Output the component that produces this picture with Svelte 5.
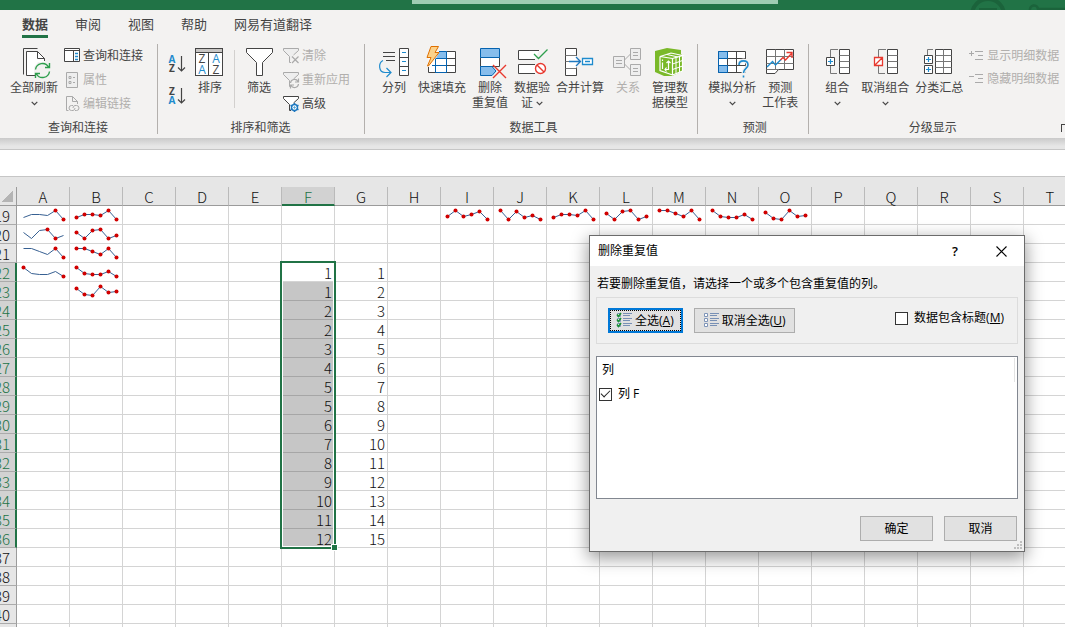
<script lang="ts">
  interface Tool {
    icon: string;
    lines: string[];
    menu?: 'below' | 'inline';
    disabled?: boolean;
  }

  interface SmallTool {
    icon: string;
    label: string;
    disabled?: boolean;
  }

  interface Spark {
    points: number[];
    marks: number[];
  }

  const tabs = ['数据', '审阅', '视图', '帮助', '网易有道翻译'];
  let activeTab = $state('数据');

  const queryTools: SmallTool[] = [
    { icon: 'queries', label: '查询和连接' },
    { icon: 'props', label: '属性', disabled: true },
    { icon: 'links', label: '编辑链接', disabled: true },
  ];

  const filterTools: SmallTool[] = [
    { icon: 'clear', label: '清除', disabled: true },
    { icon: 'reapply', label: '重新应用', disabled: true },
    { icon: 'advanced', label: '高级' },
  ];

  const detailTools: SmallTool[] = [
    { icon: 'show', label: '显示明细数据', disabled: true },
    { icon: 'hide', label: '隐藏明细数据', disabled: true },
  ];

  const dataTools: Tool[] = [
    { icon: 'split', lines: ['分列'] },
    { icon: 'flash', lines: ['快速填充'] },
    { icon: 'dedupe', lines: ['删除', '重复值'] },
    { icon: 'validate', lines: ['数据验', '证'], menu: 'inline' },
    { icon: 'consolidate', lines: ['合并计算'] },
    { icon: 'relations', lines: ['关系'], disabled: true },
    { icon: 'model', lines: ['管理数', '据模型'] },
  ];

  const forecastTools: Tool[] = [
    { icon: 'whatif', lines: ['模拟分析'], menu: 'below' },
    { icon: 'forecast', lines: ['预测', '工作表'] },
  ];

  const outlineTools: Tool[] = [
    { icon: 'group', lines: ['组合'], menu: 'below' },
    { icon: 'ungroup', lines: ['取消组合'], menu: 'below' },
    { icon: 'subtotal', lines: ['分类汇总'] },
  ];

  const columns = 'ABCDEFGHIJKLMNOPQRST'.split('');
  const rows = Array.from({ length: 23 }, (_, i) => i + 19);
  const selection = { column: 'F', first: 22, last: 36 };

  const columnF = [1, 1, 2, 2, 3, 4, 5, 5, 6, 7, 8, 9, 10, 11, 12];
  const values: Record<string, number> = {};
  columnF.forEach((value, i) => {
    values[`F${22 + i}`] = value;
    values[`G${22 + i}`] = i + 1;
  });

  const all = [0, 1, 2, 3, 4, 5];
  const series = [
    [11, 8, 8, 9, 4, 13],
    [7, 13, 5, 4, 13, 10],
    [4, 4, 7, 10, 4, 13],
    [4, 10, 11, 11, 8, 13],
    [6, 12, 13, 4, 10, 9],
  ];
  const sparks: Record<string, Spark> = {
    A19: { points: series[0], marks: [4, 5] },
    A20: { points: series[1], marks: [3, 4] },
    A21: { points: series[2], marks: [4, 5] },
    A22: { points: series[3], marks: [0, 5] },
    B19: { points: series[0], marks: all },
    B20: { points: series[1], marks: all },
    B21: { points: series[2], marks: all },
    B22: { points: series[3], marks: all },
    B23: { points: series[4], marks: all },
    I19: { points: [10, 4, 10, 8, 5, 13], marks: all },
    J19: { points: [4, 13, 5, 11, 9, 13], marks: all },
    K19: { points: series[0], marks: all },
    L19: { points: series[1], marks: all },
    M19: { points: series[2], marks: all },
    N19: { points: series[3], marks: all },
    O19: { points: series[4], marks: all },
  };

  let hasHeader = $state(false);
  let columnChecked = $state(true);
  let dialogOpen = $state(true);

  const sparkX = (i: number) => 6.5 + i * 8;

  function inSelection(row: number) {
    return row >= selection.first && row <= selection.last;
  }
</script>

{#snippet chevron()}
  <svg class="chevron" width="7" height="5" viewBox="0 0 7 5" aria-hidden="true">
    <path d="M.7 .8 3.5 3.6 6.3 .8" fill="none" stroke="#444" stroke-width="1.2" />
  </svg>
{/snippet}

{#snippet bigIcon(name: string)}
  <svg class="icon" width="32" height="28" viewBox="0 0 32 28" fill="none" stroke="#444" aria-hidden="true">
    {#if name === 'refresh'}
      <path d="M19.5 .5H5.5V26.5" />
      <path d="M17 27.5H8.5V3.5H19.5L26.5 10.5V14H20L16 19V27.5Z" fill="#fff" stroke="none" />
      <path d="M17 27.5H8.5V3.5H19.5L26.5 10.5V13M19.5 3.5V10.5H26.5" />
      <path d="M17.5 21.5A7 7 0 0 1 30.5 19M31.5 23.5A7 7 0 0 1 18.5 26M31.5 15V19.5H27M17.5 30V25.5H22" stroke="#2e9f4d" stroke-width="1.4" />
    {:else if name === 'sort'}
      <rect x="1.5" y=".5" width="27" height="27" fill="#fff" />
      <path d="M2 1H28V4H2Z" fill="#c8c6c4" stroke="none" />
      <path d="M1.5 4.5H28.5M14.5 4.5V27.5" />
      <g class="letters" stroke="none" fill="#444" text-anchor="middle">
        <text x="8" y="15">Z</text>
        <text x="22" y="15" fill="#1e8bcd">A</text>
        <text x="8" y="26" fill="#1e8bcd">A</text>
        <text x="22" y="26">Z</text>
      </g>
    {:else if name === 'filter'}
      <path d="M3.5 .5H29.5V4.5L19.5 14.5V27.5H13.5V14.5L3.5 4.5Z" fill="#fff" />
    {:else if name === 'split'}
      <path d="M5 4.5H17M5 8.5H17M8 12.5H17" />
      <path d="M21.5 .5H30.5V27.5H21.5ZM21.5 9.5H30.5M21.5 18.5H30.5" fill="#fff" />
      <path d="M24 4.5H28M24 13.5H28M24 22.5H28M5 12.5C0 15 .5 24.5 7 24.5H13M8.5 20 13 24.5 8.5 29" stroke="#1e8bcd" stroke-width="1.2" />
    {:else if name === 'flash'}
      <path d="M2.5 3.5H29.5V24.5H2.5Z" fill="#fff" stroke="none" />
      <path d="M13 3.5H20.5V10.5H10Z" fill="#86bdec" stroke="none" />
      <path d="M20.5 3.5H29.5V24.5H2.5V19M20.5 10.5H29.5M20.5 17.5H29.5" />
      <path d="M13 3.5H20.5V24.5M9.5 10.5H20.5M6 17.5H20.5M9.5 11V24.5M9.5 24.5H20.5" stroke="#0563b0" />
      <path d="M5 -1.5H12.5L9 4.5H13L2.5 18H1.5L5 9.5H1Z" fill="#fcd28a" stroke="#e07000" />
    {:else if name === 'dedupe'}
      <path d="M6.5 9.5H25.5V18.5H6.5Z" fill="#fff" />
      <path d="M6.5 .5H25.5V9.5H6.5ZM18 27.5H6.5V18.5H18L22 23Z" fill="#86bdec" stroke="#0563b0" />
      <path d="M19 17 32 30M32 17 19 30" stroke="#e8392f" stroke-width="1.4" />
    {:else if name === 'validate'}
      <path d="M19 11.5H2.5V2.5H23M19 25.5H2.5V16.5H19" fill="#fff" />
      <path d="M18 6 22.5 10.5 31.5 1.5" stroke="#2e9f4d" stroke-width="1.3" />
      <circle cx="24.5" cy="20.5" r="5" fill="#fff" stroke="#e8392f" stroke-width="1.4" />
      <path d="M21 17 28 24" stroke="#e8392f" stroke-width="1.4" />
    {:else if name === 'consolidate'}
      <path d="M1.5 .5H12.5V27.5H1.5Z" fill="#fff" stroke="none" />
      <path d="M12.5 8V.5H1.5V27.5H12.5V19.5" />
      <path d="M1.5 7.5H12.5M1.5 20.5H12.5M1.5 13.5H5" stroke="#777" />
      <path d="M5 13.5H16M12 9 16.5 13.5 12 18" stroke="#1e78c0" stroke-width="1.3" />
      <path d="M18.5 10.5H28.5V16.5H18.5ZM21 13.5H26" fill="#fff" stroke="#1e8bcd" stroke-width="1.3" />
    {:else if name === 'relations'}
      <g stroke="#aaa">
        <path d="M12.5 12 18.5 6M12.5 16 18.5 22" />
        <path d="M1.5 8.5H12.5V19.5H1.5ZM18.5 .5H28.5V11.5H18.5ZM18.5 16.5H28.5V27.5H18.5Z" fill="#eee" />
        <path d="M4 12.5H10M4 15.5H10M21 4.5H26M21 7.5H26M21 20.5H26M21 23.5H26" />
      </g>
    {:else if name === 'model'}
      <path d="M1 3 13 0 27 2V6L29 8V23L18 28H10L1 24Z" fill="#7ab929" stroke="none" />
      <path d="M6 8.5 17 5 28.5 7.5 18.5 10.5ZM6 8.5V22.5L18.5 27V10.5M28.5 8V23L18.5 27" stroke="#fff" stroke-width="1.2" />
      <path d="M22 9.5V25.5M25.5 8.5V24M18.5 16 28.5 12.5M18.5 21.5 28.5 18M13 6.5 24 9" stroke="#fff" />
      <path d="M8.5 11.5V13M8.5 14.5V21M14.5 13V21.5H11M12.5 15 14.5 13 16.5 15M12.5 19.5 11 21.5 12.5 23.5" stroke="#fff" stroke-width="1.2" />
    {:else if name === 'whatif'}
      <path d="M2.5 3.5H29.5V24.5H2.5Z" fill="#fff" />
      <path d="M11.5 3.5V24.5M20.5 3.5V24.5M11.5 10.5H29.5M2.5 17.5H29.5" />
      <path d="M2.5 3.5H11.5V10.5H2.5ZM2.5 17.5H11.5V24.5H2.5Z" fill="#86bdec" stroke="#0563b0" />
      <path d="M2.5 10.5V17.5" stroke="#0563b0" />
      <path d="M23 17C23 11 32 11 32 17C32 20.5 27.5 20.5 27.5 25V29" stroke="#f3f2f1" stroke-width="4" />
      <path d="M23 17C23 11.5 32 11.5 32 17C32 20.5 27.5 20.5 27.5 25M27.5 27.5V29.5" stroke="#1e8bcd" stroke-width="1.6" />
    {:else if name === 'forecast'}
      <path d="M2.5 1.5H29.5V21.5H14.5L11 25.5H2.5Z" fill="#fff" />
      <path d="M11.5 1.5V21.5M20.5 1.5V21.5M2.5 8.5H29.5M2.5 15.5H29.5M2.5 21.5H14" stroke="#777" />
      <path d="M3 19 8.5 13.5 11.5 17 17 11.5" stroke="#1e8bcd" stroke-width="1.4" />
      <path d="M16.5 12 19 9.5 21.5 12 28 5M22.5 4.5H28V10" stroke="#e8392f" stroke-width="1.4" />
    {:else if name === 'group' || name === 'ungroup'}
      <path d="M17 1.5H9.5V9M9.5 18V25.5H16" stroke="#777" />
      <path d="M18.5 1.5H28.5V25.5H18.5Z" fill="#fff" />
      <path d="M18.5 7.5H28.5M18.5 13.5H28.5M18.5 19.5H28.5" stroke="#777" />
      {#if name === 'group'}
        <path d="M5.5 9.5H13.5V17.5H5.5Z" fill="#fff" />
        <path d="M9.5 11V16M7 13.5H12" stroke="#1e8bcd" stroke-width="1.2" />
      {:else}
        <path d="M5.5 9.5H13.5V17.5H5.5ZM5.5 17.5 13.5 9.5" fill="#fff" stroke="#e8392f" stroke-width="1.3" />
      {/if}
    {:else if name === 'subtotal'}
      <path d="M10 1.5H4.5V7" stroke="#777" />
      <path d="M12.5 1.5H28.5V25.5H12.5Z" fill="#fff" />
      <path d="M12.5 7.5H28.5M12.5 13.5H28.5M12.5 19.5H28.5M20.5 1.5V25.5" stroke="#777" />
      <path d="M1.5 7.5H9.5V15.5H1.5ZM1.5 17.5H9.5V25.5H1.5Z" fill="#fff" />
      <path d="M5.5 9V14M3 11.5H8M5.5 19V24M3 21.5H8" stroke="#1e8bcd" stroke-width="1.2" />
    {/if}
  </svg>
{/snippet}

{#snippet smallIcon(name: string)}
  <svg class="icon" width="16" height="16" viewBox="0 0 16 16" fill="none" stroke="#aaa" aria-hidden="true">
    {#if name === 'queries'}
      <path d="M.5 .5H15.5V13.5H.5Z" fill="#fff" stroke="#444" />
      <path d="M1 2.5H15M9.5 3V13" stroke="#444" />
      <path d="M11 5.5H14M11 8.5H14M11 11.5H14" stroke="#1e8bcd" stroke-width="1.5" />
    {:else if name === 'props'}
      <path d="M2.5 .5H13.5V15.5H2.5Z" fill="#eee" />
      <path d="M5 4.5H7V6.5H5ZM5 9.5H7V11.5H5ZM9 5.5H11M9 10.5H11" />
    {:else if name === 'links'}
      <path d="M4.5 14.5H2.5V.5H8.5L13.5 5.5V8M8.5 .5V5.5H13.5" />
      <path d="M9 9.5H7.5A2.5 2.5 0 0 0 7.5 14.5H9A2.5 2.5 0 0 0 11 12M11 14.5H12.5A2.5 2.5 0 0 0 12.5 9.5H11A2.5 2.5 0 0 0 9 12" />
    {:else if name === 'clear' || name === 'reapply' || name === 'advanced'}
      <path
        d="M6.5 14.5V8.5L.5 2.5V.5H15.5V2.5L10.5 7M6.5 14.5H8"
        fill={name === 'advanced' ? '#fff' : '#eee'}
        stroke={name === 'advanced' ? '#444' : '#aaa'}
      />
      {#if name === 'clear'}
        <path d="M9 8.5 15.5 15M15.5 8.5 9 15" stroke-width="1.2" />
      {:else if name === 'reapply'}
        <circle cx="11.5" cy="11.5" r="4.5" fill="#f3f2f1" stroke="none" />
        <path d="M7.5 11A4 4 0 0 1 15 9.5M15.5 12A4 4 0 0 1 8 13.5M15.5 6.5V10H12M7.5 16.5V13H11" stroke-width="1.2" />
      {:else}
        <circle cx="11.5" cy="11.5" r="3" fill="#fff" stroke="#1e78c0" stroke-width="1.4" />
        <circle cx="11.5" cy="11.5" r=".7" stroke="#1e8bcd" />
        <path d="M11.5 7V9M11.5 14V16M7.5 9.2 9.4 10.2M15.5 9.2 13.6 10.2M7.5 13.8 9.4 12.8M15.5 13.8 13.6 12.8" stroke="#1e78c0" stroke-width="1.6" />
      {/if}
    {:else}
      <path d="M6 3.5H14M9 7.5H14M6 11.5H14M0 5.5H5" />
      {#if name === 'show'}<path d="M2.5 3V8" />{/if}
    {/if}
  </svg>
{/snippet}

{#snippet tool(item: Tool)}
  <button class="tool" disabled={item.disabled}>
    {@render bigIcon(item.icon)}
    <span class="tool__label">
      {#each item.lines as line, i}
        <span class="tool__line">
          {line}
          {#if item.menu === 'inline' && i === item.lines.length - 1}{@render chevron()}{/if}
        </span>
      {/each}
      {#if item.menu === 'below'}
        <span class="tool__line">{@render chevron()}</span>
      {/if}
    </span>
  </button>
{/snippet}

{#snippet stack(items: SmallTool[])}
  <div class="stack">
    {#each items as item}
      <button class="small" disabled={item.disabled}>
        {@render smallIcon(item.icon)}
        {item.label}
      </button>
    {/each}
  </div>
{/snippet}

{#snippet azIcon(top: string, bottom: string)}
  <svg class="icon" width="18" height="16" viewBox="0 0 18 16" aria-hidden="true">
    <g class="az" text-anchor="middle">
      <text x="4" y="7" fill={top === 'A' ? '#1e8bcd' : '#444'}>{top}</text>
      <text x="4" y="16" fill={bottom === 'A' ? '#1e8bcd' : '#444'}>{bottom}</text>
    </g>
    <path d="M13.5 0V15M10 11.5 13.5 15 17 11.5" fill="none" stroke="#444" stroke-width="1.2" />
  </svg>
{/snippet}

{#snippet listIcon(checked: boolean)}
  <svg class="icon" width="16" height="15" viewBox="0 0 16 15" fill="none" aria-hidden="true">
    {#each [0, 5, 10] as y}
      <path d="M1.5 {y + 0.5}H4.5V{y + 3.5}H1.5Z" fill="#fff" stroke="#7f95b8" />
      <path d="M7 {y + 0.5}H16M7 {y + 2.5}H14" stroke="#7890b5" />
      {#if checked}
        <path d="M1 {y + 1.5} 2.5 {y + 3.5} 5 {y}" stroke="#1d9136" stroke-width="1.6" />
      {/if}
    {/each}
  </svg>
{/snippet}

<div class="app" lang="zh-CN">
  <header class="titlebar">
    <button class="titlebar__search" aria-label="搜索"></button>
    <svg class="titlebar__art" width="96" height="10" viewBox="0 0 96 10" fill="none" stroke="#1b633b" aria-hidden="true">
      <circle cx="19" cy="15" r="16" stroke-width="4" />
      <path d="M10 8H28V10H10Z" fill="#1b633b" stroke="none" />
      <path d="M61 10A4 4 0 0 1 69 9H96" stroke-width="2.5" />
    </svg>
  </header>

  <nav class="tabs" aria-label="功能区">
    {#each tabs as tab}
      <button class="tabs__tab" class:tabs__tab--active={activeTab === tab} onclick={() => (activeTab = tab)}>
        {tab}
      </button>
    {/each}
  </nav>

  <div class="ribbon">
    <section class="group">
      <div class="group__tools">
        {@render tool({ icon: 'refresh', lines: ['全部刷新'], menu: 'below' })}
        {@render stack(queryTools)}
      </div>
      <div class="group__name">查询和连接</div>
    </section>
    <section class="group">
      <div class="group__tools">
        <div class="sorts">
          <button class="small" aria-label="升序">{@render azIcon('A', 'Z')}</button>
          <button class="small" aria-label="降序">{@render azIcon('Z', 'A')}</button>
        </div>
        {@render tool({ icon: 'sort', lines: ['排序'] })}
        <div class="divider"></div>
        {@render tool({ icon: 'filter', lines: ['筛选'] })}
        {@render stack(filterTools)}
      </div>
      <div class="group__name">排序和筛选</div>
    </section>
    <section class="group group--data">
      <div class="group__tools">
        {#each dataTools as item}{@render tool(item)}{/each}
      </div>
      <div class="group__name">数据工具</div>
    </section>
    <section class="group group--plain">
      <div class="group__tools">
        {#each forecastTools as item}{@render tool(item)}{/each}
      </div>
      <div class="group__name">预测</div>
    </section>
    <section class="group group--last">
      <div class="group__tools">
        {#each outlineTools as item}{@render tool(item)}{/each}
        {@render stack(detailTools)}
      </div>
      <div class="group__name">
        分级显示
        <button class="launcher" aria-label="分级显示设置"></button>
      </div>
    </section>
  </div>
  <div class="ribbon-shadow"></div>

  <input class="formula" type="text" aria-label="编辑栏" />

  <main class="sheet">
    <table class="grid">
      <colgroup>
        <col class="grid__numbers" />
        {#each columns as column (column)}<col class="grid__column" />{/each}
      </colgroup>
      <thead>
        <tr>
          <th class="corner"></th>
          {#each columns as column}
            <th class="col" class:col--selected={column === selection.column} scope="col">{column}</th>
          {/each}
        </tr>
      </thead>
      <tbody>
        {#each rows as row}
          <tr>
            <th class="row" class:row--selected={inSelection(row)} scope="row">
              <span class="row__number">{row}</span>
            </th>
            {#each columns as column}
              {@const key = column + row}
              {@const first = column === selection.column && row === selection.first}
              <td
                class:cell--filled={column === selection.column && inSelection(row) && !first}
                class:cell--first={first}
              >
                {#if sparks[key]}
                  <svg class="spark" width="50" height="16" viewBox="0 2 50 16" aria-hidden="true">
                    <polyline
                      points={sparks[key].points.map((y, i) => `${sparkX(i)},${y + 0.5}`).join(' ')}
                      fill="none"
                      stroke="#376092"
                    />
                    {#each sparks[key].marks as i}
                      <circle cx={sparkX(i)} cy={sparks[key].points[i] + 0.5} r="2" fill="#d00000" />
                    {/each}
                  </svg>
                {:else}
                  {values[key] ?? ''}
                {/if}
                {#if first}<span class="selection"></span>{/if}
              </td>
            {/each}
          </tr>
        {/each}
      </tbody>
    </table>
  </main>

  {#if dialogOpen}
    <div class="dialog" role="dialog" aria-labelledby="dialog-title">
      <div class="dialog__title">
        <span id="dialog-title">删除重复值</span>
        <button class="dialog__control" aria-label="帮助">?</button>
        <button class="dialog__control" aria-label="关闭" onclick={() => (dialogOpen = false)}>
          <svg class="icon" width="11" height="11" viewBox="0 0 11 11" aria-hidden="true">
            <path d="M.5 .5 10.5 10.5M10.5 .5 .5 10.5" stroke="#000" stroke-width="1.1" />
          </svg>
        </button>
      </div>
      <div class="dialog__body">
        <p class="dialog__text">若要删除重复值，请选择一个或多个包含重复值的列。</p>
        <div class="options">
          <button class="btn btn--focus" onclick={() => (columnChecked = true)}>
            {@render listIcon(true)}<span>全选(<u>A</u>)</span>
          </button>
          <button class="btn" onclick={() => (columnChecked = false)}>
            {@render listIcon(false)}<span>取消全选(<u>U</u>)</span>
          </button>
          <label class="check options__header">
            <input type="checkbox" bind:checked={hasHeader} />
            <span>数据包含标题(<u>M</u>)</span>
          </label>
        </div>
        <div class="list">
          <div class="list__head">列</div>
          <label class="check">
            <input type="checkbox" bind:checked={columnChecked} />
            <span>列 F</span>
          </label>
        </div>
        <div class="actions">
          <button class="btn btn--wide">确定</button>
          <button class="btn btn--wide" onclick={() => (dialogOpen = false)}>取消</button>
        </div>
      </div>
      <svg class="grip" width="8" height="8" viewBox="0 0 8 8" fill="#bfbfbf" aria-hidden="true">
        <path d="M6 0H8V2H6ZM3 3H5V5H3ZM6 3H8V5H6ZM0 6H2V8H0ZM3 6H5V8H3ZM6 6H8V8H6Z" />
      </svg>
    </div>
  {/if}
</div>

<style>
  :global(body) {
    margin: 0;
    overflow: hidden;
  }

  .app {
    position: relative;
    display: flex;
    flex-direction: column;
    height: 100vh;
    overflow: hidden;
    background: #f3f2f1;
    color: #444;
    font: 12px/16px 'Open Sans', 'Noto Sans CJK SC', sans-serif;
  }

  button,
  input {
    box-sizing: border-box;
    margin: 0;
    padding: 0;
    border: none;
    background: none;
    color: inherit;
    font: inherit;
  }

  .icon {
    display: block;
    flex: none;
    overflow: visible;
  }

  /* title bar and tabs */
  .titlebar {
    display: flex;
    justify-content: space-between;
    flex: none;
    height: 10px;
    padding-left: 412px;
    background: #217346;
  }

  .titlebar__search {
    width: 366px;
    height: 4px;
    background: #9fcdb3;
  }

  .tabs {
    display: flex;
    flex: none;
    gap: 27px;
    padding: 0 22px 6px;
  }

  .tabs__tab {
    height: 28px;
    padding-top: 3px;
    border-bottom: 3px solid transparent;
    font-size: 13px;
    line-height: 22px;
    white-space: nowrap;
  }

  .tabs__tab--active {
    border-bottom-color: #217346;
    font-weight: 700;
  }

  /* ribbon */
  .ribbon {
    display: flex;
    flex: none;
    padding-bottom: 4px;
  }

  .group {
    flex: none;
    padding: 4px 14px 0 10px;
    border-right: 1px solid #b3b0ad;
  }

  .group--data {
    padding-left: 11px;
    padding-right: 9px;
  }

  .group--plain {
    padding-right: 10px;
  }

  .group--last {
    flex: 1 0 auto;
    padding-right: 6px;
    border-right: none;
  }

  .group__tools {
    display: flex;
    gap: 6px;
    height: 64px;
  }

  .group__name {
    position: relative;
    margin-top: 8px;
    padding: 1px 0 0 3px;
    line-height: 13px;
    text-align: center;
  }

  .group--last .group__name {
    padding-right: 16px;
  }

  .launcher {
    position: absolute;
    top: 4px;
    right: -10px;
    width: 8px;
    height: 8px;
    border: 1px solid #444;
    border-width: 1px 0 0 1px;
  }

  .tool {
    display: flex;
    flex-direction: column;
    align-items: center;
    gap: 4px;
    min-width: 36px;
  }

  .tool__label,
  .tool__line {
    display: block;
    line-height: 15px;
    white-space: nowrap;
  }

  .tool__line {
    height: 15px;
  }

  .chevron {
    display: inline-block;
    vertical-align: middle;
  }

  .tool:disabled,
  .small:disabled {
    color: #b1afad;
  }

  .stack {
    display: flex;
    flex-direction: column;
    gap: 8px;
  }

  .group--last .stack {
    gap: 7px;
  }

  .sorts {
    display: flex;
    flex-direction: column;
    align-self: center;
    gap: 16px;
  }

  .small {
    display: flex;
    align-items: center;
    gap: 3px;
    height: 16px;
    white-space: nowrap;
  }

  .group--last .small {
    gap: 2px;
  }

  .divider {
    width: 1px;
    margin: 2px 0 4px;
    background: #d2d0ce;
  }

  .letters {
    font-size: 12px;
  }

  .az {
    font-size: 10px;
    font-weight: 700;
  }

  .ribbon-shadow {
    flex: none;
    height: 11px;
    background: linear-gradient(#cacaca, #e6e6e6 8px);
  }

  .formula {
    flex: none;
    height: 28px;
    padding: 0 8px;
    border: 1px solid #c6c6c6;
    border-width: 1px 0;
    background: #fff;
    outline: none;
  }

  /* worksheet */
  .sheet {
    flex: 1;
    min-height: 0;
    padding-top: 10px;
    overflow: hidden;
    background: #e6e6e6;
    color: #111;
    font: 300 15px/16px 'Noto Sans CJK SC', sans-serif;
  }

  .grid {
    width: max-content;
    table-layout: fixed;
    border-spacing: 0;
  }

  .grid__numbers {
    width: 17px;
  }

  .grid__column {
    width: 53px;
  }

  th,
  td {
    box-sizing: border-box;
    height: 19px;
    padding: 2px 0 0;
    border: 1px solid #d4d4d4;
    border-width: 0 1px 1px 0;
    font-weight: inherit;
    line-height: 16px;
  }

  td {
    padding-right: 2px;
    background: #fff;
    text-align: right;
  }

  .corner {
    border-color: #9b9b9b;
    background: linear-gradient(135deg, transparent 50%, #b4b4b4 50%) 2px 4px / 11px 11px no-repeat;
  }

  .col {
    border-color: #bababa;
    border-bottom-color: #9b9b9b;
    text-align: center;
  }

  .col--selected {
    border-bottom: 2px solid #217346;
    background: #d2d2d2;
    color: #217346;
    line-height: 15px;
  }

  .row {
    border-color: #ababab;
    border-right-color: #9b9b9b;
  }

  /* numbers run past the left edge of the narrow header */
  .row__number {
    display: flex;
    justify-content: flex-end;
    width: 10px;
  }

  .row--selected {
    border-right: 2px solid #217346;
    background: #d2d2d2;
    color: #217346;
  }

  .cell--filled {
    border-bottom-color: #a6a6a6;
    background: #c6c6c6;
  }

  .cell--first {
    position: relative;
  }

  .selection {
    position: absolute;
    top: -2px;
    right: -2px;
    left: -2px;
    box-sizing: border-box;
    height: 288px;
    border: 2px solid #217346;
    box-shadow: inset 0 0 0 1px #fff;
    pointer-events: none;
  }

  .selection::after {
    content: '';
    position: absolute;
    right: -3px;
    bottom: -3px;
    width: 5px;
    height: 5px;
    background: #217346;
    box-shadow: 0 0 0 1px #fff;
  }

  .spark {
    display: block;
    overflow: visible;
  }

  /* dialog window */
  .dialog {
    position: absolute;
    top: 235px;
    left: 589px;
    box-sizing: border-box;
    width: 436px;
    border: 1px solid #6b6b6b;
    background: #f0f0f0;
    box-shadow: 0 5px 16px 1px rgba(0, 0, 0, 0.4);
    color: #000;
  }

  .dialog__title {
    display: flex;
    align-items: center;
    height: 30px;
    padding-left: 8px;
    background: #fff;
  }

  .dialog__title span {
    flex: 1;
  }

  .dialog__control {
    display: flex;
    align-items: center;
    justify-content: center;
    width: 46px;
    height: 30px;
    font-size: 13px;
    font-weight: 600;
  }

  .dialog__body {
    padding: 10px 6px;
  }

  .dialog__text {
    margin: 0 1px 5px;
  }

  .options {
    display: flex;
    align-items: flex-start;
    gap: 11px;
    padding: 10px 13px 10px 11px;
    border: 1px solid #dcdcdc;
  }

  .options__header {
    margin: 2px 0 0 auto;
  }

  .btn {
    display: flex;
    align-items: center;
    justify-content: center;
    gap: 3px;
    height: 25px;
    padding: 0 8px;
    border: 1px solid #adadad;
    background: #e1e1e1;
    white-space: nowrap;
  }

  .btn--focus {
    border: 2px solid #0078d7;
    outline: 1px dotted #000;
    outline-offset: -3px;
    padding: 0 7px 0 6px;
  }

  .btn--wide {
    width: 73px;
    padding: 0;
  }

  .check {
    display: flex;
    align-items: center;
    gap: 6px;
  }

  .check input {
    display: flex;
    align-items: center;
    justify-content: center;
    width: 13px;
    height: 13px;
    border: 1px solid #333;
    background: #fff;
    appearance: none;
  }

  .check input:checked::before {
    content: '';
    width: 8px;
    height: 4px;
    margin-bottom: 3px;
    border: solid #222;
    border-width: 0 0 1px 1px;
    transform: rotate(-45deg);
  }

  .list {
    height: 141px;
    margin-top: 12px;
    border: 1px solid #828790;
    background: #fff;
  }

  .list__head {
    height: 24px;
    margin: 1px 2px 4px 0;
    padding-left: 5px;
    border-right: 1px solid #e3e3e3;
    line-height: 24px;
  }

  .list .check {
    padding-left: 2px;
  }

  .actions {
    display: flex;
    justify-content: flex-end;
    gap: 11px;
    margin: 17px 1px 0 0;
  }

  .grip {
    position: absolute;
    right: 2px;
    bottom: 2px;
  }
</style>
